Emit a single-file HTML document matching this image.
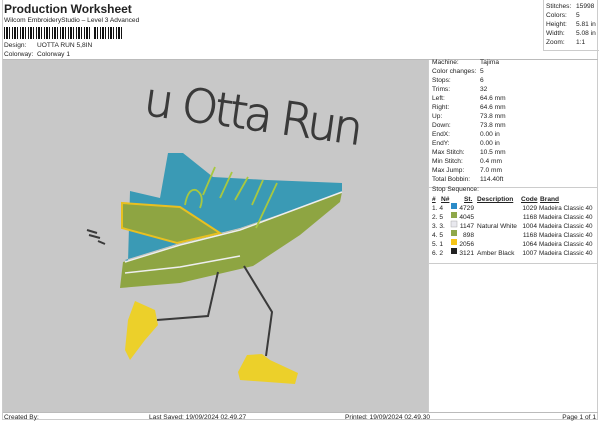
<!DOCTYPE html>
<html><head><meta charset="utf-8"><style>
*{margin:0;padding:0}
body{width:600px;height:424px;background:#fff;position:relative;font-family:"Liberation Sans",Arial,sans-serif;color:#222;overflow:hidden}
.a{position:absolute;white-space:nowrap;font-size:6.6px;line-height:9px}
.hl{position:absolute;background:#bbb}
</style></head><body>
<div class="a" style="left:4px;top:2px;font-size:12px;line-height:14px;font-weight:bold">Production Worksheet</div>
<div class="a" style="left:4px;top:16px">Wilcom EmbroideryStudio – Level 3 Advanced</div>
<div style="position:absolute;left:4px;top:27px;width:118px;height:12px;background:repeating-linear-gradient(90deg,#111 0 1px,#fff 1px 2px,#111 2px 4px,#fff 4px 5px,#111 5px 6px,#fff 6px 8px)"></div>
<div style="position:absolute;left:90px;top:27px;width:4px;height:14px;background:#fff"></div>
<div class="a" style="left:4px;top:41px">Design:</div><div class="a" style="left:37px;top:41px">UOTTA RUN 5,8IN</div>
<div class="a" style="left:4px;top:50px">Colorway:</div><div class="a" style="left:37px;top:50px">Colorway 1</div>
<div style="position:absolute;left:2px;top:0;width:596px;height:420px;border:1px solid #ccc;box-sizing:border-box;border-top:none"></div>
<div style="position:absolute;left:543px;top:0;width:55px;height:50px;border-left:1px solid #ccc;border-bottom:1px solid #ccc"></div>
<div class="a" style="left:546px;top:2px">Stitches:</div><div class="a" style="left:576px;top:2px">15998</div>
<div class="a" style="left:546px;top:11px">Colors:</div><div class="a" style="left:576px;top:11px">5</div>
<div class="a" style="left:546px;top:20px">Height:</div><div class="a" style="left:576px;top:20px">5.81 in</div>
<div class="a" style="left:546px;top:29px">Width:</div><div class="a" style="left:576px;top:29px">5.08 in</div>
<div class="a" style="left:546px;top:38px">Zoom:</div><div class="a" style="left:576px;top:38px">1:1</div>
<div class="hl" style="left:3px;top:59px;width:595px;height:1px"></div>
<div style="position:absolute;left:3px;top:60px;width:425px;height:352px;background:#c8c8c8"></div>
<div class="hl" style="left:3px;top:412px;width:595px;height:1px"></div>
<div style="position:absolute;left:428px;top:60px;width:1px;height:352px;background:#ccc"></div>
<div style="position:absolute;left:429px;top:187px;width:169px;height:1px;background:#ccc"></div>
<div style="position:absolute;left:429px;top:263px;width:169px;height:1px;background:#ccc"></div>
<div class="a" style="left:432px;top:58px">Machine:</div><div class="a" style="left:480px;top:58px">Tajima</div>
<div class="a" style="left:432px;top:67px">Color changes:</div><div class="a" style="left:480px;top:67px">5</div>
<div class="a" style="left:432px;top:76px">Stops:</div><div class="a" style="left:480px;top:76px">6</div>
<div class="a" style="left:432px;top:85px">Trims:</div><div class="a" style="left:480px;top:85px">32</div>
<div class="a" style="left:432px;top:94px">Left:</div><div class="a" style="left:480px;top:94px">64.6 mm</div>
<div class="a" style="left:432px;top:103px">Right:</div><div class="a" style="left:480px;top:103px">64.6 mm</div>
<div class="a" style="left:432px;top:112px">Up:</div><div class="a" style="left:480px;top:112px">73.8 mm</div>
<div class="a" style="left:432px;top:121px">Down:</div><div class="a" style="left:480px;top:121px">73.8 mm</div>
<div class="a" style="left:432px;top:130px">EndX:</div><div class="a" style="left:480px;top:130px">0.00 in</div>
<div class="a" style="left:432px;top:139px">EndY:</div><div class="a" style="left:480px;top:139px">0.00 in</div>
<div class="a" style="left:432px;top:148px">Max Stitch:</div><div class="a" style="left:480px;top:148px">10.5 mm</div>
<div class="a" style="left:432px;top:157px">Min Stitch:</div><div class="a" style="left:480px;top:157px">0.4 mm</div>
<div class="a" style="left:432px;top:166px">Max Jump:</div><div class="a" style="left:480px;top:166px">7.0 mm</div>
<div class="a" style="left:432px;top:175px">Total Bobbin:</div><div class="a" style="left:480px;top:175px">114.40ft</div>
<div class="a" style="left:432px;top:185px">Stop Sequence:</div>
<div class="a" style="left:432px;top:195px;font-weight:bold;text-decoration:underline">#</div>
<div class="a" style="left:441px;top:195px;font-weight:bold;text-decoration:underline">N#</div>
<div class="a" style="left:464px;top:195px;font-weight:bold;text-decoration:underline">St.</div>
<div class="a" style="left:477px;top:195px;font-weight:bold;text-decoration:underline">Description</div>
<div class="a" style="left:521px;top:195px;font-weight:bold;text-decoration:underline">Code</div>
<div class="a" style="left:540px;top:195px;font-weight:bold;text-decoration:underline">Brand</div>
<svg width="600" height="424" style="position:absolute;left:0;top:0" font-family="Liberation Sans" font-size="6.6">
<g fill="#222">
<text x="432" y="210">1.  4</text><text x="432" y="219">2.  5</text><text x="432" y="228">3.  3.</text><text x="432" y="237">4.  5</text><text x="432" y="246">5.  1</text><text x="432" y="255">6.  2</text>
<g text-anchor="end"><text x="474" y="210">4729</text><text x="474" y="219">4045</text><text x="474" y="228">1147</text><text x="474" y="237">898</text><text x="474" y="246">2056</text><text x="474" y="255">3121</text></g>
<text x="477" y="228">Natural White</text><text x="477" y="255">Amber Black</text>
<g text-anchor="end"><text x="537" y="210">1029</text><text x="537" y="219">1168</text><text x="537" y="228">1004</text><text x="537" y="237">1168</text><text x="537" y="246">1064</text><text x="537" y="255">1007</text></g>
<g font-size="6.3"><text x="539" y="210">Madeira Classic 40</text><text x="539" y="219">Madeira Classic 40</text><text x="539" y="228">Madeira Classic 40</text><text x="539" y="237">Madeira Classic 40</text><text x="539" y="246">Madeira Classic 40</text><text x="539" y="255">Madeira Classic 40</text></g>
<text x="4" y="419">Created By:</text><text x="149" y="419">Last Saved: 19/09/2024 02.49.27</text><text x="345" y="419">Printed: 19/09/2024 02.49.30</text><text x="596" y="419" text-anchor="end">Page 1 of 1</text>
</g>
<rect x="451" y="203" width="6" height="6" fill="#2a8bc8"/><rect x="451" y="212" width="6" height="6" fill="#8fa84a"/><rect x="451" y="221" width="6" height="6" fill="#e8e8ee" stroke="#aaa" stroke-width=".5"/><rect x="451" y="230" width="6" height="6" fill="#8fa84a"/><rect x="451" y="239" width="6" height="6" fill="#f5c518"/><rect x="451" y="248" width="6" height="6" fill="#222"/>
<text x="142" y="128" transform="rotate(8 240 125)" font-family="DejaVu Sans" font-weight="200" font-size="46" fill="#3a3a3a" stroke="#3a3a3a" stroke-width="1" letter-spacing="-3">u Otta Run</text>
<path d="M128,262 L130,191 L160,198 L168,153 L183,153 L213,177 L267,180 L342,183 L342,193 L240,228 L180,243 L125,260Z" fill="#3a9ab5"/>
<path d="M123,262 L180,244 L240,229 L342,192 L340,202 L300,235 L253,266 L180,283 L120,288 Z" fill="#8ea542"/>
<path d="M125,262 L180,245 L240,230 L342,192" fill="none" stroke="#eee" stroke-width="1.5"/>
<path d="M125,273 L180,267 L240,256" fill="none" stroke="#eee" stroke-width="1.5"/>
<path d="M122,203 L122,228 L177,243 L220,233 L180,207Z" fill="#8ea542" stroke="#e8c020" stroke-width="2"/>
<g stroke="#a8c840" stroke-width="1.8" fill="none">
<path d="M215,167 L203,195 M232,172 L220,198 M248,177 L235,200 M263,180 L252,205 M277,183 L256,228"/>
<path d="M185,205 Q188,188 196,190 Q205,195 200,208"/>
</g>
<g stroke="#3a3a3a" stroke-width="2" fill="none"><path d="M87,230 L97,233 M89,235 L100,238 M98,241 L105,244"/>
<path d="M218,272 L208,316 L157,320"/><path d="M244,266 L272,312 L266,356"/></g>
<path d="M135,301 L155,310 L158,325 L145,340 L130,360 L125,350 L128,320Z" fill="#ecd02a"/>
<path d="M247,355 L262,354 L270,360 L298,373 L295,384 L240,380 L238,372Z" fill="#ecd02a"/>
</svg>
</body></html>
